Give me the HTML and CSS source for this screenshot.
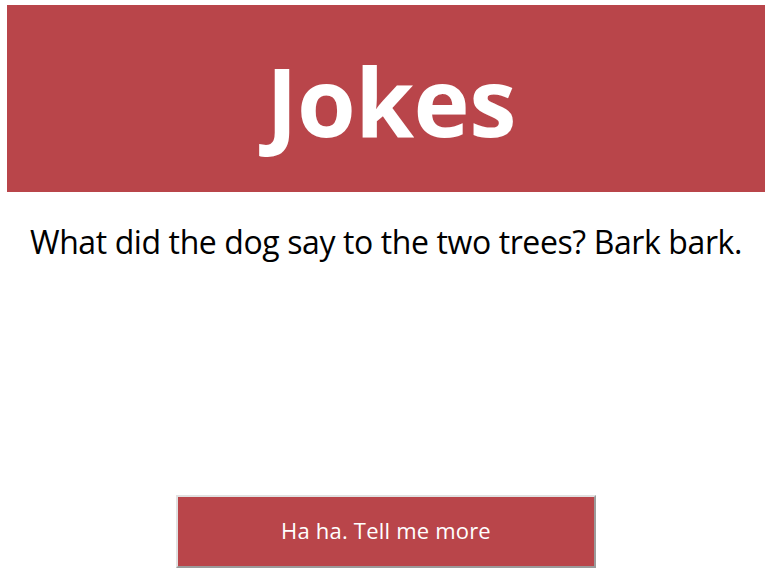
FILE: index.html
```html
<!DOCTYPE html>
<html>
<head>
<meta charset="utf-8">
<link rel="stylesheet" href="styles.css">
</head>
<body>
<div class="page">
  <header class="banner">
    <h1 class="title">Jokes</h1>
  </header>
  <p class="joke">What did the dog say to the two trees? Bark bark.</p>
  <div class="actions">
    <button class="more">Ha ha. Tell me more</button>
  </div>
</div>
</body>
</html>
```
FILE: styles.css
```css
html, body {
  margin: 0;
  padding: 0;
  background: #ffffff;
}
.page {
  display: flex;
  flex-direction: column;
  padding: 5px 10px 0 7px;
  font-family: "Open Sans", "DejaVu Sans", sans-serif;
}
.banner {
  height: 187px;
  background: #b9454a;
  display: flex;
  align-items: center;
  justify-content: center;
}
.title {
  margin: 0;
  color: #ffffff;
  font-size: 95px;
  font-weight: 700;
  line-height: 1;
  letter-spacing: -0.6px;
  padding-top: 4px;
  padding-left: 10px;
}
.joke {
  margin: 30px 0 0;
  text-align: center;
  font-size: 32px;
  line-height: 40px;
  color: #000000;
  letter-spacing: -0.4px;
}
.actions {
  display: flex;
  justify-content: center;
  margin-top: 233px;
}
.more {
  width: 420px;
  height: 73px;
  background: #b9454a;
  color: #ffffff;
  font-family: "Open Sans", sans-serif;
  font-size: 22px;
  letter-spacing: 0.2px;
  border-style: solid;
  border-width: 2px;
  border-color: #e1e1e1 #9b9b9b #9b9b9b #e1e1e1;
  padding: 0 0 4px;
  margin: 0;
}
```
